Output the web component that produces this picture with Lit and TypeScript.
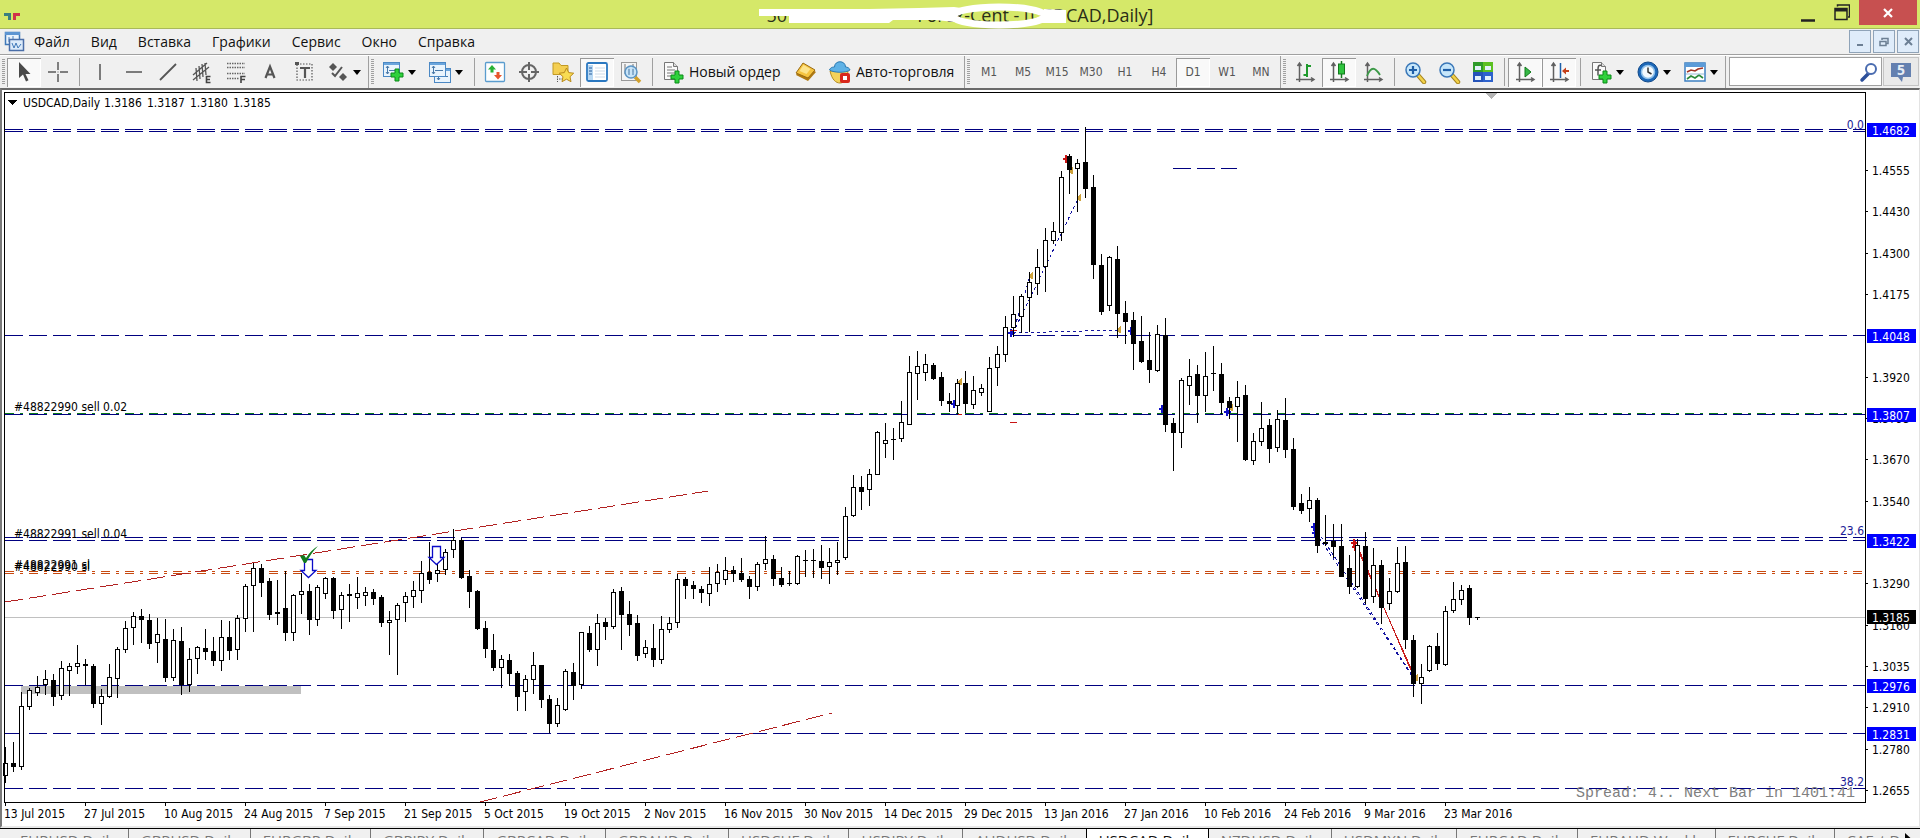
import { LitElement, html, svg, css } from "lit";
import { customElement, state } from "lit/decorators.js";
import { classMap } from "lit/directives/class-map.js";

/* ---------- icons, drawn on a 24 x 24 grid ---------- */
const plus = (x: number, y: number) => svg`<path transform="translate(${x} ${y})" d="M4 0h4v4h4v4h-4v4h-4v-4h-4v-4h4z" fill="#2fd13c" stroke="#0b8a18" stroke-width="1"/>`;
const chartWin = (x: number, y: number) => svg`<g transform="translate(${x} ${y})"><rect x=".5" y=".5" width="16" height="14" fill="#e9f4fd" stroke="#4b88c4"/><rect x="1" y="1" width="15" height="2" fill="#6aa5dc"/><path d="M4.500 4v8M3 6l1.500-2L6 6M3 10l1.500 2L6 10M6 8.500h8" stroke="#4878a8" fill="none"/></g>`;
const axes = svg`<path d="M6.500 3v19M3 19.500h18M4.500 6l2-3 2 3M18 17.500l3 2-3 2" fill="none" stroke="#606060" stroke-width="1.500"/>`;
const page = svg`<path d="M3.500 2.500h9l4 4v13h-13z" fill="#fafafa" stroke="#777"/><path d="M12.500 2.500v4h4" fill="#ddd" stroke="#777"/>`;
const lens = (x: number, y: number, sign: string) => svg`<g transform="translate(${x} ${y})"><path d="M12 12l7 8" stroke="#a88620" stroke-width="4.500" stroke-linecap="round"/><path d="M13 13l6 7" stroke="#f2d24a" stroke-width="2.500" stroke-linecap="round"/><circle cx="8" cy="8" r="7" fill="#c6e6fa" stroke="#3a77b8" stroke-width="1.500"/><path d="${sign}" stroke="#1f5fa8" stroke-width="2.200"/></g>`;

const ICONS: Record<string, unknown> = {
  cursor: svg`<path d="M7 2v16l4-3.500 3 7 2.500-1.200-3-6.300h5z" fill="#4a4a4a"/>`,
  cross: svg`<path d="M12 2v8M12 14v8M2 12h8M14 12h8" stroke="#5a5a5a" stroke-width="1.500"/><rect x="11.500" y="11.500" width="1" height="1" fill="#5a5a5a"/>`,
  vline: svg`<path d="M12 4v16" stroke="#555" stroke-width="1.500"/>`,
  hline: svg`<path d="M4 12h16" stroke="#555" stroke-width="1.500"/>`,
  trend: svg`<path d="M4 20L20 4" stroke="#555" stroke-width="1.800"/>`,
  channel: svg`<path d="M3 15L17 3M3 20L19 7M6 8l1 13M9 6l1 13M12 4l1 13M15 3l1 12" stroke="#555" stroke-width="1.300"/><path d="M20.500 16.500h-4v6h4M16.500 19.500h3.500" fill="none" stroke="#444" stroke-width="1.600"/>`,
  fibo: svg`<path d="M3 3.500h18M3 7.500h18M3 13.500h18M3 18.500h12" stroke="#666" stroke-width="1.300" stroke-dasharray="1.500 1"/><path d="M17 23v-6.500h4.500M17 19.500h4" fill="none" stroke="#444" stroke-width="1.600"/>`,
  letterA: svg`<path d="M7.500 18L12 6.500 16.500 18M9 14.500h6" fill="none" stroke="#555" stroke-width="2.200"/>`,
  textBox: svg`<rect x="5" y="4" width="15" height="16" fill="none" stroke="#555" stroke-width="1.200" stroke-dasharray="1.500 1.500"/><path d="M8 8h10M13 8v10" stroke="#555" stroke-width="2.200"/><rect x="3" y="2" width="4" height="3" fill="#555"/>`,
  shapes: svg`<path d="M7 3l4 4-4 4-4-4zM17 13l4 4-4 4-4-4z" fill="#555"/><path d="M6 13l3 3 7-9" fill="none" stroke="#555" stroke-width="2"/>`,
  newChart: svg`${chartWin(2, 2)}${plus(10, 9)}`,
  profiles: svg`${chartWin(6, 8)}${chartWin(1, 2)}`,
  market: svg`<rect x="2.500" y="2.500" width="19" height="19" rx="1" fill="#fdfefe" stroke="#5a9cce" stroke-width="1.300"/><path d="M9 5l4 4.500h-2.500v3h-3v-3h-2.500z" fill="#27b236"/><path d="M15 19.500l-4-4.500h2.500v-3h3v3h2.500z" fill="#e8552c"/>`,
  target: svg`<circle cx="12" cy="12" r="7" fill="none" stroke="#666" stroke-width="2"/><path d="M12 2v8M12 14v8M2 12h8M14 12h8" stroke="#666" stroke-width="2"/>`,
  favorites: svg`<path d="M2 3h6l2 2.500h7v9H2z" fill="#f4cf52" stroke="#c29a25"/><path d="M6.500 16v6M8 19h4" stroke="#555" stroke-dasharray="1.500 1"/><path d="M15.500 8l2.200 4.600 5 .6-3.700 3.500 1 5-4.500-2.500-4.500 2.500 1-5-3.700-3.500 5-.6z" fill="#f9dc52" stroke="#b98a1c"/>`,
  navigator: svg`<rect x="2" y="3" width="20" height="18" rx="1.500" fill="#fff" stroke="#2b78c0" stroke-width="1.800"/><rect x="3" y="5" width="5" height="15" fill="#b7d8f4"/><path d="M4 8h3M4 11h3M4 14h3" stroke="#2b5c9a"/><path d="M10 8h10M10 11h10M10 14h10M10 17h10" stroke="#cfdbe8"/>`,
  tester: svg`<rect x="2.500" y="2.500" width="15" height="18" fill="#f4f4f4" stroke="#999"/><path d="M6 4v10M10 6v8M14 4v8" stroke="#777"/><path d="M16 17l5 5" stroke="#d1a02c" stroke-width="3.500"/><circle cx="12" cy="12" r="6" fill="#bfe0f8" fill-opacity=".85" stroke="#5b94c4" stroke-width="1.500"/><path d="M10 15v-6M14 15v-6" stroke="#4b7aa8"/>`,
  order: svg`${page}<path d="M6 7h5M6 10h8M6 13h8M6 16h4" stroke="#777"/>${plus(10, 11)}`,
  editor: svg`<path d="M9 4l13 8-8 9L2 15z" fill="#b07a12"/><path d="M9 3l12 7-7 8L2 13z" fill="#f6c440" stroke="#9a6a10"/><path d="M9.500 5l7 4-4 5-7-3z" fill="#fde48c"/>`,
  auto: svg`<path d="M2 11c2 9 6 12 10 12s7-4 8-12z" fill="#f4d25a" stroke="#b48c20"/><path d="M1.500 10c1-3 4-3 5-3 0-7 11-7 11 0 2 0 4 1 4.500 3-4 3-16 3-20.500 0z" fill="#5fb2e6" stroke="#2c7ab2"/><rect x="12" y="13" width="10" height="10" rx="2" fill="#d8281c"/><rect x="15" y="16" width="4" height="4" fill="#fff"/>`,
  bars: svg`${axes}<path d="M14 4v13M14 6h4M10.500 15H14" stroke="#1f9a2c" stroke-width="2" fill="none"/>`,
  candles: svg`${axes}<path d="M14.500 1v17" stroke="#137a1e" stroke-width="1.500"/><rect x="11.500" y="4" width="6" height="10" fill="#2fc43e" stroke="#137a1e"/>`,
  lineChart: svg`${axes}<path d="M6 16c4-10 8-9 13-1" stroke="#3c9a48" stroke-width="1.800" fill="none"/>`,
  zoomIn: lens(2, 2, "M4 8h8M8 4v8"),
  zoomOut: lens(2, 2, "M4 8h8"),
  tile: svg`<rect x="2" y="2" width="10" height="10" fill="#2f9b2a"/><rect x="12" y="2" width="10" height="10" fill="#5cc022"/><rect x="2" y="12" width="10" height="10" fill="#2553b8"/><rect x="12" y="12" width="10" height="10" fill="#2e62cc"/><path d="M4 6h6v4H4zM14 6h6v4h-6zM4 16h6v4H4zM14 16h6v4h-6z" fill="#e2f0fa"/>`,
  scroll: svg`${axes}<path d="M12 7l6 5-6 5z" fill="#35b845" stroke="#137a1e"/>`,
  shift: svg`${axes}<path d="M13.500 3v15" stroke="#1d5fa8" stroke-width="1.500"/><path d="M15 11l4-3.500v2.500h3v2h-3v2.500z" fill="#c4411c"/>`,
  indicator: svg`${page}<path d="M12.500 5.500c-3-1-3.500 1-3.500 4v6M6 10h6" stroke="#555" stroke-width="1.500" fill="none"/>${plus(10, 11)}`,
  clock: svg`<circle cx="12" cy="12" r="10" fill="#1c67b8" stroke="#124a8a"/><circle cx="12" cy="12" r="6.500" fill="#f4f9fd" stroke="#8fc0ea" stroke-width="1.500"/><path d="M12 7.500V12l3.500 2" stroke="#333" stroke-width="1.500" fill="none"/>`,
  template: svg`<rect x="2" y="3" width="20" height="18" fill="#fff" stroke="#3c7fc0" stroke-width="1.500"/><rect x="2" y="3" width="20" height="4" fill="#5b9bd8"/><path d="M4 12l4-2 4 1 3-2 5-1" stroke="#a03224" stroke-width="1.600" fill="none"/><path d="M4 19l4-3 4 2 4-3 4 3" stroke="#2c8a3a" stroke-width="1.600" fill="none"/><path d="M3 14h18" stroke="#9bbcd8"/>`,
};
const icon = (name: string) => html`<svg class="icon" width="24" height="24" viewBox="0 0 24 24" aria-hidden="true">${ICONS[name]}</svg>`;

/* ---------- chart data: high, body top, body bottom, low, kind ---------- */
const BARS = `747 763 776 783 w|742 763 767 772 b|692 706 767 770 w|688 690 707 710 w|676 687 693 696 w|670 679 685 695 w|674 680 697 706 b|661 668 696 700 w|663 666 671 696 w|645 663 667 674 w
659 664 666 685 b|664 666 704 708 b|689 696 704 725 w|664 677 697 698 w|647 649 679 698 w|621 628 650 653 w|612 616 628 645 w|609 616 620 643 b|614 620 644 649 b|618 634 643 663 w
619 639 678 682 b|629 640 678 681 w|627 641 685 695 b|648 659 685 692 w|646 647 659 674 w|629 648 652 660 b|637 651 661 666 b|620 637 661 671 w|621 637 651 660 b|615 618 650 660 w
584 586 619 632 w|563 568 586 632 w|564 568 583 597 b|578 581 615 620 b|580 612 614 625 b|571 608 633 641 b|594 595 633 641 w|573 591 595 614 w|584 591 620 635 b|585 587 620 626 w
577 578 594 599 w|577 578 611 619 b|592 595 610 629 w|584 594 596 622 b|577 593 598 609 w|587 592 596 606 w|589 592 599 605 b|595 597 623 627 b|611 620 623 655 w|603 605 620 675 w
592 596 603 622 w|581 590 597 608 w|561 573 591 603 w|542 572 580 584 b|563 570 574 582 w|549 552 570 575 w|529 540 550 558 w|538 540 578 579 b|570 576 592 608 b|590 591 629 630 b
621 628 649 658 b|634 650 668 671 b|655 659 668 688 w|654 660 674 686 b|671 673 697 711 b|675 679 692 711 w|652 665 680 694 w|665 665 700 708 b|695 699 724 733 b|698 705 724 727 w
669 671 710 711 w|663 672 686 700 b|632 632 685 689 w|626 633 650 652 b|614 623 650 666 w|618 622 627 640 b|589 592 627 629 w|587 591 615 650 b|601 614 625 636 b|615 623 656 661 b
640 647 654 658 w|624 648 660 667 b|616 629 660 664 w|617 623 630 633 w|574 579 623 628 w|577 579 586 599 b|581 585 589 599 b|586 589 593 603 b|567 584 594 606 w|564 572 584 592 w
557 570 580 585 w|566 570 574 582 b|558 573 580 582 b|576 579 587 599 b|562 564 587 591 w|536 559 564 570 w|555 559 579 586 b|567 578 585 587 b|571 583 584 586 b|555 556 584 585 w
550 560 561 577 b|549 560 561 578 b|545 561 568 579 b|548 562 567 584 w|542 560 563 575 w|507 516 558 560 w|475 487 516 517 w|476 487 492 510 b|469 474 490 506 w|431 432 475 475 w
423 440 444 458 w|428 439 440 460 b|401 422 439 442 w|356 372 425 425 w|351 366 374 400 w|354 364 373 381 w|363 365 379 380 b|372 377 401 406 b|393 401 404 412 b|379 383 406 414 w
371 383 404 413 b|376 390 405 409 w|384 388 393 396 w|357 368 412 412 w|346 354 368 386 w|316 327 355 362 w|296 314 328 337 w|294 296 317 333 w|272 282 298 332 w|249 267 284 295 w
228 240 267 292 w|222 231 241 244 w|171 177 233 241 w|154 156 170 194 b|159 163 169 212 w|127 162 189 198 b|175 187 265 279 b|254 265 312 315 b|256 257 306 311 w|246 259 314 338 b
301 313 322 344 b|312 320 344 370 b|316 341 362 363 b|332 360 370 383 b|325 334 371 372 w|318 335 425 432 b|418 423 433 471 b|378 380 433 448 w|359 376 386 405 w|365 374 396 423 b
352 376 396 412 w|346 373 374 391 b|363 374 403 414 b|397 401 408 419 b|381 397 407 442 w|385 395 460 461 b|433 441 461 465 w|402 428 442 446 w|419 425 449 463 b|410 419 448 452 w
398 420 450 458 b|438 449 507 510 b|494 503 511 514 b|487 500 509 522 w|498 500 546 553 b|515 542 544 546 b|524 541 547 558 b|524 546 577 577 b|555 568 587 594 b|539 545 587 588 w
532 546 599 604 b|548 565 597 603 w|560 565 608 624 b|578 591 604 610 w|547 563 592 593 w|546 562 640 649 b|635 640 684 697 b|664 677 684 704 w|645 646 671 672 w|633 646 664 670 b
606 611 665 666 w|582 599 611 613 w|585 590 600 605 w|585 588 618 625 b|617 617 618 620 b`
  .split(/[|\n]/)
  .map((row) => {
    const [high, top, bottom, low, kind] = row.trim().split(" ");
    return { high: +high, top: +top, bottom: +bottom, low: +low, rising: kind === "w" };
  });

const QUOTES = ["1.3186", "1.3187", "1.3180", "1.3185"];
const DATES = ["13 Jul 2015", "27 Jul 2015", "10 Aug 2015", "24 Aug 2015", "7 Sep 2015", "21 Sep 2015", "5 Oct 2015", "19 Oct 2015", "2 Nov 2015", "16 Nov 2015", "30 Nov 2015", "14 Dec 2015", "29 Dec 2015", "13 Jan 2016", "27 Jan 2016", "10 Feb 2016", "24 Feb 2016", "9 Mar 2016", "23 Mar 2016"];
const PRICES: [number, string][] = [[170, "1.4555"], [211, "1.4430"], [253, "1.4300"], [294, "1.4175"], [377, "1.3920"], [418, "1.3795"], [459, "1.3670"], [501, "1.3540"], [583, "1.3290"], [625, "1.3160"], [666, "1.3035"], [707, "1.2910"], [749, "1.2780"], [790, "1.2655"]];
const BADGES: [number, string, string][] = [[130, "1.4682", "level"], [336, "1.4048", "level"], [415, "1.3807", "level"], [541, "1.3422", "level"], [617, "1.3185", "bid"], [686, "1.2976", "level"], [734, "1.2831", "level"]];
const LEVELS: [number, string][] = [[129, "navy"], [131, "navy"], [335, "navy"], [414, "navy"], [413, "green"], [537, "navy"], [540, "navy"], [571, "stop"], [573, "stop"], [617, "now"], [685, "navy"], [733, "navy"], [788, "navy"]];
const TRENDS: [number, number, number, number, string][] = [
  [5, 602, 708, 491, "trend"], [480, 802, 832, 713, "trend"],
  [1013, 333, 1118, 330, "deal"], [1013, 333, 1078, 199, "deal"], [1013, 333, 1030, 276, "deal"],
  [1315, 527, 1412, 675, "deal"], [1316, 533, 1412, 676, "deal"],
  [1355, 543, 1413, 673, "loss"], [1357, 545, 1413, 675, "loss"],
];
const EXITS = [[1071, 171], [1079, 198], [1031, 276], [1119, 330], [1231, 408], [960, 382], [1416, 678]];
const ENTRIES: [number, number, string][] = [[1011, 333, "buy"], [1131, 331, "buy"], [1162, 409, "buy"], [1227, 412, "buy"], [954, 404, "buy"], [1314, 527, "buy"], [1315, 533, "buy"], [1066, 159, "sell"], [1354, 543, "sell"], [1355, 547, "sell"]];

@customElement("price-chart")
export class PriceChart extends LitElement {
  @state() private w = 1864;
  @state() private h = 736;
  private observer?: ResizeObserver;

  static styles = css`
    :host { display: flex; flex: 1; min-height: 0; min-width: 0; background: #fff; }
    .plot { flex: 1; min-width: 0; height: 100%; display: block; }
    .axis { flex: none; width: 53px; height: 100%; display: block; }
    svg { shape-rendering: crispEdges; overflow: hidden; }
    text { font: 12px "DejaVu Sans Condensed", "Noto Sans", sans-serif; fill: #000; }
    .frame { stroke: #000; fill: none; }
    .navy { stroke: #000080; stroke-dasharray: 18 6; }
    .green { stroke: #0a7a1a; stroke-dasharray: 9 6 3 6; }
    .stop { stroke: #c84a10; stroke-dasharray: 9 6 3 6; }
    .now { stroke: #c0c0c0; }
    .trend { stroke: #b22222; stroke-dasharray: 18 6; }
    .deal { stroke: #1414a0; stroke-dasharray: 3 3; }
    .loss { stroke: #c81e1e; }
    .zone { fill: #c0c0c0; }
    .wick { stroke: #000; }
    .rise { fill: #fff; stroke: #000; }
    .fall { fill: #000; }
    .exit { fill: #cfa33c; }
    .buy { fill: #1010c8; }
    .sell { fill: #c81414; }
    .arrow { fill: #fff; stroke: #0a0ac8; stroke-width: 1.300; shape-rendering: auto; }
    .tick { fill: #117a1e; shape-rendering: auto; }
    .fib { fill: #1c1c96; text-anchor: end; }
    .spread { font: 15px "Liberation Mono", "Courier New", monospace; fill: #808080; text-anchor: end; }
    .level { fill: #0000ff; }
    .bid { fill: #000; }
    .on-badge { fill: #fff; }
    .shift { fill: #b4b4b4; }
  `;

  connectedCallback() {
    super.connectedCallback();
    this.observer = new ResizeObserver(() => {
      const box = this.getBoundingClientRect();
      this.w = Math.max(200, Math.round(box.width) - 53);
      this.h = Math.max(100, Math.round(box.height));
    });
    this.observer.observe(this);
  }
  disconnectedCallback() {
    this.observer?.disconnect();
    super.disconnectedCallback();
  }

  private y = (v: number) => Math.round(((v - 92) * (this.h - 26)) / 710) + 2;
  private x = (v: number) => v - 2;

  private bar(b: (typeof BARS)[number], i: number) {
    const x = 3 + i * 8;
    const top = this.y(b.top);
    const height = Math.max(1, this.y(b.bottom) - top);
    return svg`<line class="wick" x1=${x + 0.5} x2=${x + 0.5} y1=${this.y(b.high)} y2=${this.y(b.low)} />
      ${b.rising
        ? svg`<rect class="rise" x=${x - 1.5} y=${top + 0.5} width="4" height=${Math.max(1, height - 1)} />`
        : svg`<rect class="fall" x=${x - 2} y=${top} width="5" height=${height} />`}`;
  }

  render() {
    const { w, h, x, y } = this;
    const base = h - 24;
    const downArrow = (px: number, py: number) => svg`<path class="arrow" transform="translate(${x(px)} ${y(py)})" d="M4.500 .500h8v11h3.500l-7.500 7-7.500-7h3.500z" />`;
    return html`
      <svg class="plot" role="img" aria-label="USDCAD, Daily">
        ${LEVELS.map(([v, kind]) => svg`<line class=${kind} x1="3" x2=${w - 1} y1=${y(v) + 0.5} y2=${y(v) + 0.5} />`)}
        <line class="navy" x1=${x(1173)} x2=${x(1237)} y1=${y(168) + 0.5} y2=${y(168) + 0.5} />
        <rect class="zone" x=${x(21)} y=${y(686)} width="280" height="8" />
        ${TRENDS.map(([x1, y1, x2, y2, kind]) => svg`<line class=${kind} x1=${x(x1)} y1=${y(y1)} x2=${x(x2)} y2=${y(y2)} />`)}
        ${ENTRIES.map(([px, py, kind]) => svg`<path class=${kind} transform="translate(${x(px)} ${y(py)})" d="M-3 -1h2v-3h2v2h1v1h2v2h-2v1h-1v2h-2v-3h-2z" />`)}
        ${EXITS.map(([px, py]) => svg`<path class="exit" transform="translate(${x(px)} ${y(py)})" d="M-3 0l4-4h1v7h-1z" />`)}
        <g class="sell">
          <rect x=${x(1010)} y=${y(422)} width="7" height="1" />
          <rect x=${x(1010)} y=${y(330)} width="7" height="1" />
          <rect x=${x(958)} y=${y(414)} width="4" height="1" />
        </g>
        ${BARS.map((b, i) => this.bar(b, i))}
        ${downArrow(300, 559)} ${downArrow(428, 546)}
        <path class="tick" transform="translate(${x(300)} ${y(546)})" d="M0 10l4-1 2 3q5-8 12-12-7 7-12 17l-2 0z" />
        <path class="shift" d="M${w - 380} 3h11l-5.500 6z" />
        <path class="frame" d="M2.500 ${base + 0.5}V2.500H${w - 0.5}V${base + 0.5}z" />
        <path d="M6 10h9l-4.500 5z" />
        <text x="21" y="17">USDCAD,Daily</text>
        ${QUOTES.map((q, i) => svg`<text x=${102 + i * 43} y="17">${q}</text>`)}
        <text x="12" y=${y(411)}>#48822990 sell 0.02</text>
        <text x="12" y=${y(538)}>#48822991 sell 0.04</text>
        <text x="12" y=${y(569)}>#48822991 sl</text>
        <text x="12" y=${y(571)}>#48822990 sl</text>
        <text class="fib" x=${w - 2} y=${y(129)}>0.0</text>
        <text class="fib" x=${w - 2} y=${y(535)}>23.6</text>
        <text class="fib" x=${w - 2} y=${y(786)}>38.2</text>
        <text class="spread" x=${w - 11} y=${base - 5}>Spread: 4.. Next Bar in 1401:41</text>
        ${DATES.map((d, i) => svg`<line class="wick" x1=${3.5 + i * 80} x2=${3.5 + i * 80} y1=${base} y2=${base + 4} /><text x=${2 + i * 80} y=${base + 16}>${d}</text>`)}
      </svg>
      <svg class="axis" role="img" aria-label="Price scale">
        ${PRICES.map(([v, t]) => svg`<line class="wick" x1="0" x2="2" y1=${y(v) + 0.5} y2=${y(v) + 0.5} /><text x="6" y=${y(v) + 5}>${t}</text>`)}
        ${BADGES.map(([v, t, kind]) => svg`<rect class=${kind} x="1" y=${y(v) - 7} width="49" height="14" /><text class="on-badge" x="6" y=${y(v) + 5}>${t}</text>`)}
      </svg>
    `;
  }
}

type Tool = { id: string; label: string; menu?: boolean; on?: boolean; text?: string } | "sep";
const DRAW: Tool[] = [
  { id: "cursor", label: "Курсор", on: true }, { id: "cross", label: "Перекрестие" }, "sep",
  { id: "vline", label: "Вертикальная линия" }, { id: "hline", label: "Горизонтальная линия" }, { id: "trend", label: "Трендовая линия" },
  { id: "channel", label: "Канал" }, { id: "fibo", label: "Фибоначчи" }, { id: "letterA", label: "Текст" }, { id: "textBox", label: "Метка" }, { id: "shapes", label: "Стрелки", menu: true },
];
const STANDARD: Tool[] = [
  { id: "newChart", label: "Новый график", menu: true }, { id: "profiles", label: "Профили", menu: true }, "sep",
  { id: "market", label: "Обзор рынка" }, { id: "target", label: "Окно данных" }, { id: "favorites", label: "Навигатор" }, { id: "navigator", label: "Терминал", on: true }, { id: "tester", label: "Тестер" }, "sep",
  { id: "order", label: "Новый ордер", text: "Новый ордер" }, { id: "editor", label: "Редактор" }, { id: "auto", label: "Авто-торговля", text: "Авто-торговля" },
];
const CHARTS: Tool[] = [
  { id: "bars", label: "Бары" }, { id: "candles", label: "Свечи", on: true }, { id: "lineChart", label: "Линия" }, "sep",
  { id: "zoomIn", label: "Увеличить" }, { id: "zoomOut", label: "Уменьшить" }, { id: "tile", label: "Плитка" }, "sep",
  { id: "scroll", label: "Автопрокрутка", on: true }, { id: "shift", label: "Сдвиг графика", on: true }, "sep",
  { id: "indicator", label: "Индикаторы", menu: true }, { id: "clock", label: "Периоды", menu: true }, { id: "template", label: "Шаблоны", menu: true },
];
const PERIODS = ["M1", "M5", "M15", "M30", "H1", "H4", "D1", "W1", "MN"];
const MENU = ["Файл", "Вид", "Вставка", "Графики", "Сервис", "Окно", "Справка"];
const TABS = ["EURUSD,Daily", "GBPUSD,Daily", "EURGBP,Daily", "GBPJPY,Daily", "GBPCAD,Daily", "GBPAUD,Daily", "USDCHF,Daily", "USDJPY,Daily", "AUDUSD,Daily", "USDCAD,Daily", "NZDUSD,Daily", "USDMXN,Daily", "EURCAD,Daily", "EURAUD,Weekly", "EURCHF,Daily", "CAFst,Daily"];

@customElement("app-root")
export class AppRoot extends LitElement {
  @state() private period = "D1";
  @state() private tab = "USDCAD,Daily";

  static styles = css`
    :host { display: flex; flex-direction: column; height: 100vh; overflow: hidden; background: #f0f0f0; color: #111; font: 14px/20px "Open Sans", "Noto Sans", sans-serif; }
    button { font: inherit; color: inherit; border: 0; padding: 0; margin: 0; background: none; }
    .title { position: relative; display: flex; align-items: center; justify-content: center; flex: none; height: 28px; background: #d5e869; border-bottom: 1px solid #a9b95a; }
    .logo { position: absolute; left: 4px; top: 12px; }
    .caption { display: flex; gap: 130px; font-size: 18px; line-height: 24px; color: #2a2e18; white-space: pre; padding-top: 3px; box-sizing: border-box; height: 28px; }
    .mask { position: absolute; left: 50%; top: 0; margin-left: -201px; }
    .win { position: absolute; right: 0; top: 0; display: flex; height: 25px; padding-right: 3px; }
    .win button { width: 34px; display: flex; align-items: center; justify-content: center; }
    .win .close { width: 58px; background: #c75050; }
    .menu { display: flex; flex: none; align-items: center; height: 25px; padding-left: 4px; border-bottom: 1px solid #a0a0a0; gap: 1px; }
    .menu .item { padding: 0 10px; height: 25px; line-height: 25px; }
    .menu .first { margin-right: -3px; }
    .mdi { margin-left: auto; display: flex; gap: 2px; padding-right: 1px; }
    .mdi button { width: 22px; height: 23px; box-sizing: border-box; background: #dfecfa; border: 1px solid #8fa3b8; display: flex; align-items: center; justify-content: center; }
    .tools { display: flex; flex: none; height: 33px; align-items: stretch; border-top: 1px solid #fff; box-sizing: border-box; }
    .group { display: flex; flex: none; align-items: center; border-right: 1px solid #a0a0a0; }
    .group.wide { padding-right: 2px; }
    .grip { width: 3px; height: 26px; margin: 0 2px; background: repeating-linear-gradient(#a0a0a0 0 1px, #f0f0f0 1px 2px); }
    .tool { flex: none; display: flex; align-items: center; width: 34px; height: 29px; padding-left: 5px; box-sizing: border-box; white-space: nowrap; }
    .tool.menu-tool { width: 47px; gap: 3px; }
    .tool.named { width: auto; gap: 4px; padding: 0 0 0 5px; }
    .order { min-width: 133px; }
    .auto { min-width: 141px; }
    .on { background: #f9f9f9; box-shadow: inset 1px 1px #999, inset -1px -1px #fff; }
    .icon { flex: none; display: block; }
    .caret { border: 4px solid transparent; border-top: 5px solid #000; border-bottom: 0; }
    .sep { width: 1px; height: 28px; margin: 0 3px 0 4px; background: #a0a0a0; }
    .period { width: 34px; height: 29px; font: 12px/29px "DejaVu Sans Condensed", "Noto Sans", sans-serif; color: #555; text-align: center; }
    .search { flex: 1; min-width: 60px; display: flex; align-items: center; margin: 1px 1px 2px 3px; border: 1px solid #a0a0a0; background: #fff; box-sizing: border-box; }
    .search input { flex: 1; min-width: 0; height: 24px; border: 0; outline: 0; padding: 0 4px; background: none; font: inherit; }
    .chat { flex: none; width: 36px; margin: 1px 1px 2px 0; border: 1px solid #c4c4c4; background: #e9e9e9; display: flex; align-items: center; justify-content: center; box-sizing: border-box; }
    .window { flex: 1; min-height: 0; display: flex; border-top: 2px solid #6a6a6a; border-left: 2px solid #7a7a7a; border-right: 1px solid #e3e3e3; border-bottom: 2px solid #e8e8e8; box-sizing: border-box; }
    .tabs { display: flex; flex: none; height: 10px; overflow: hidden; border-top: 1px solid #000; box-sizing: border-box; padding-left: 8px; position: relative; }
    .tabs .tab { flex: none; display: flex; align-items: flex-start; height: 26px; padding: 1px 11px 0 12px; border-right: 1px solid #777; color: #777; font-size: 15px; box-sizing: border-box; white-space: nowrap; }
    .tabs .tab.current { background: #fff; color: #111; border: 1px solid #000; border-top: 0; margin-left: -1px; }
    .more { position: absolute; right: 0; top: 0; width: 20px; height: 10px; background: #f0f0f0; }
    .more path { fill: #000; }
  `;

  private tool(t: Tool) {
    if (t === "sep") return html`<span class="sep"></span>`;
    return html`<button class=${classMap({ tool: true, on: !!t.on, "menu-tool": !!t.menu, named: !!t.text, [t.id]: !!t.text })} aria-label=${t.label}>
      ${icon(t.id)}${t.text ? html`<span>${t.text}</span>` : ""}${t.menu ? html`<span class="caret"></span>` : ""}
    </button>`;
  }

  render() {
    return html`
      <header class="title">
        <svg class="logo" width="17" height="9" viewBox="0 0 17 9" aria-hidden="true"><path d="M0 1h7v7H4V4H0z" fill="#3a7f80" /><path d="M9 8V1h7v3h-4v4z" fill="#d0324a" /></svg>
        <div class="caption"><span>50</span><span>Forex-Cent - [USDCAD,Daily]</span></div>
        <svg class="mask" width="310" height="29" viewBox="0 0 310 29" aria-hidden="true">
          <path fill="#fff" d="M0 9H110L160 8 195 7 210 9 198 16 196 22 176 20 134 20 130 23H30V16H0zM285 9L307 10V23H268L283 15z" />
          <ellipse cx="240" cy="16" rx="46" ry="9" fill="none" stroke="#fff" stroke-width="7" />
        </svg>
        <div class="win">
          <button aria-label="Свернуть"><svg width="16" height="18"><path d="M1 16.500h14" stroke="#222" stroke-width="2.500" /></svg></button>
          <button aria-label="Восстановить"><svg width="16" height="17"><path d="M3.500 2.500V1h12v12H14" fill="none" stroke="#222" stroke-width="1.500" /><path d="M1 4.500h12v11H1z" fill="none" stroke="#222" stroke-width="1.500" /><path d="M1 6h12" stroke="#222" stroke-width="3" /></svg></button>
          <button class="close" aria-label="Закрыть"><svg width="10" height="10"><path d="M1 1l8 8M9 1l-8 8" stroke="#fff" stroke-width="2.200" /></svg></button>
        </div>
      </header>
      <nav class="menu" aria-label="Меню">
        <svg class="first" width="22" height="22" viewBox="0 0 22 22" aria-hidden="true"><path d="M1.500 1.500h14v12h-14z" fill="#eaf3fc" stroke="#3f78b8" stroke-width="1.500" /><path d="M1 2.500h15" stroke="#5d95d2" stroke-width="3" /><path d="M5 6v5M9 5v5" stroke="#4a82c0" /><path d="M5.500 8.500h14v11h-14z" fill="#dcebfa" stroke="#4a6ea8" stroke-width="1.500" /><path d="M8 12l2 5 2-5 2 5 3-4" fill="none" stroke="#3f78b8" /></svg>
        ${MENU.map((m) => html`<button class="item">${m}</button>`)}
        <div class="mdi">
          <button aria-label="Свернуть окно"><svg width="8" height="9"><path d="M1 8h6" stroke="#6c7f94" stroke-width="2" /></svg></button>
          <button aria-label="Восстановить окно"><svg width="10" height="10"><path d="M3 3V1.500h6v5H7.500M1 4.500h6v4H1z" fill="none" stroke="#6c7f94" stroke-width="1.500" /></svg></button>
          <button aria-label="Закрыть окно"><svg width="9" height="9"><path d="M1 1l7 7M8 1l-7 7" stroke="#6c7f94" stroke-width="2" /></svg></button>
        </div>
      </nav>
      <div class="tools" role="toolbar">
        <div class="group"><span class="grip"></span>${DRAW.map((t) => this.tool(t))}</div>
        <div class="group"><span class="grip"></span>${STANDARD.map((t) => this.tool(t))}</div>
        <div class="group wide">
          <span class="grip"></span>
          ${PERIODS.map((p) => html`<button class=${classMap({ period: true, on: p === this.period })} @click=${() => (this.period = p)}>${p}</button>`)}
        </div>
        <div class="group"><span class="grip"></span>${CHARTS.map((t) => this.tool(t))}</div>
        <label class="search">
          <input type="search" aria-label="Поиск" />
          <svg width="22" height="22" viewBox="0 0 22 22" aria-hidden="true"><path d="M10 12l-7 7" stroke="#2c4f9a" stroke-width="3.500" stroke-linecap="round" /><circle cx="12" cy="8" r="5" fill="#fff" stroke="#4a6cb0" stroke-width="2" /></svg>
        </label>
        <button class="chat" aria-label="Сообщения: 5"><svg width="22" height="22" viewBox="0 0 22 22"><path d="M1 2h20v14h-8l-1 5-4-5H1z" fill="#6480b0" /><text x="11" y="14" text-anchor="middle" font-family="Open Sans, sans-serif" font-size="14" font-weight="700" fill="#e8eef6">5</text></svg></button>
      </div>
      <main class="window"><price-chart></price-chart></main>
      <div class="tabs" role="tablist">
        ${TABS.map((t) => html`<button role="tab" aria-selected=${t === this.tab} class=${classMap({ tab: true, current: t === this.tab })} @click=${() => (this.tab = t)}>${t}</button>`)}
        <svg class="more" viewBox="0 0 20 10" aria-hidden="true"><path d="M5 4l6 5.500-6 5.500z" /></svg>
      </div>
    `;
  }
}
